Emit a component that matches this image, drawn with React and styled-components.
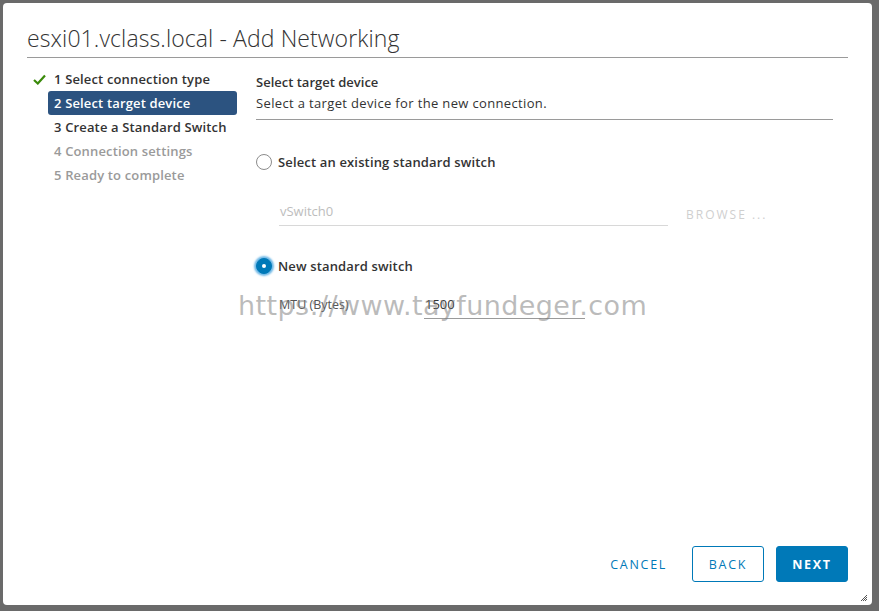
import React from "react";
import styled, { createGlobalStyle } from "styled-components";

const GlobalStyle = createGlobalStyle`
	html, body {
		margin: 0;
		padding: 0;
		background: #6a6a6a;
		font-family: "Open Sans", "Liberation Sans", sans-serif;
	}
	* { box-sizing: border-box; }
`;

const Backdrop = styled.div`
	width: 879px;
	height: 611px;
	padding: 3px 7px 6px 3px;
	background: #6a6a6a;
`;

const Dialog = styled.div`
	position: relative;
	width: 100%;
	height: 100%;
	background: #fff;
	border-radius: 4px;
	display: flex;
	flex-direction: column;
	padding: 0 24px 23px 24px;
`;

const Header = styled.h1`
	margin: 0;
	padding: 20px 0 3px 0;
	border-bottom: 1px solid #9a9a9a;
	font-size: 23px;
	line-height: 31px;
	font-weight: 300;
	color: #333;
	letter-spacing: 0.1px;
`;

const Body = styled.div`
	flex: 1;
	display: grid;
	grid-template-columns: 210px 1fr;
	gap: 19px;
	padding-top: 9px;
`;

const Steps = styled.ul`
	list-style: none;
	margin: 0;
	padding: 0;
	display: flex;
	flex-direction: column;
`;

const Step = styled.li`
	display: flex;
	align-items: center;
	height: 24px;
	font-size: 13px;
	font-weight: 600;
	letter-spacing: 0.15px;
	color: ${(p) => (p.$disabled ? "#9a9a9a" : "#333")};
`;

const Check = styled.span`
	width: 21px;
	display: flex;
	align-items: center;
	padding-left: 6px;
	color: #3a8a0a;
`;

const StepLabel = styled.span`
	flex: 1;
	height: 24px;
	line-height: 24px;
	padding-left: 6px;
	border-radius: 3px;
	background: ${(p) => (p.$active ? "#2c5380" : "transparent")};
	color: ${(p) => (p.$active ? "#fff" : "inherit")};
	white-space: nowrap;
`;

const Content = styled.div`
	padding-top: 5px;
	margin-right: 15px;
	display: flex;
	flex-direction: column;
`;

const SectionHead = styled.div`
	border-bottom: 1px solid #9a9a9a;
	padding-bottom: 5px;
`;

const SectionTitle = styled.div`
	font-size: 13px;
	font-weight: 600;
	color: #333;
	line-height: 20px;
`;

const SectionText = styled.div`
	font-size: 13px;
	letter-spacing: 0.35px;
	color: #333;
	line-height: 22px;
`;

const RadioRow = styled.label`
	display: flex;
	align-items: center;
	gap: 6px;
	height: 20px;
	margin-top: ${(p) => p.$top}px;
	font-size: 13px;
	font-weight: 600;
	letter-spacing: 0.15px;
	color: #333;
`;

const Radio = styled.span`
	width: 16px;
	height: 16px;
	border-radius: 50%;
	display: flex;
	align-items: center;
	justify-content: center;
	border: 1px solid ${(p) => (p.$checked ? "#0079b8" : "#8c8c8c")};
	background: ${(p) => (p.$checked ? "#0079b8" : "#fff")};
	box-shadow: ${(p) => (p.$checked ? "0 0 2px 2px #6fb8e6" : "none")};

	&::after {
		content: "";
		width: 4px;
		height: 4px;
		border-radius: 50%;
		background: ${(p) => (p.$checked ? "#fff" : "transparent")};
	}
`;

const FieldRow = styled.div`
	display: flex;
	align-items: flex-end;
	margin-top: ${(p) => p.$top}px;
	padding-left: 23px;
`;

const FieldLabel = styled.span`
	width: 145px;
	font-size: 12.5px;
	color: #555;
	line-height: 20px;
	padding-bottom: 4px;
`;

const Input = styled.div`
	width: ${(p) => p.$width}px;
	border-bottom: 1px solid ${(p) => (p.$disabled ? "#d8d8d8" : "#9a9a9a")};
	padding: 0 0 4px 1px;
	font-size: 13px;
	line-height: 20px;
	color: ${(p) => (p.$disabled ? "#bdbdbd" : "#333")};
`;

const LinkButton = styled.button`
	border: none;
	background: none;
	padding: 0 0 0 18px;
	margin-bottom: -1px;
	font-family: inherit;
	font-size: 12px;
	letter-spacing: 2px;
	color: ${(p) => (p.$disabled ? "#cfcfcf" : "#0079b8")};
	line-height: 24px;
`;

const Footer = styled.div`
	display: flex;
	justify-content: flex-end;
	align-items: center;
	gap: 12px;
`;

const Button = styled.button`
	height: 36px;
	min-width: 72px;
	padding: 0 12px;
	border-radius: 3px;
	font-family: inherit;
	font-size: 12.5px;
	letter-spacing: 1.7px;
	font-weight: ${(p) => (p.$primary ? 700 : 400)};
	border: 1px solid ${(p) => (p.$flat ? "transparent" : "#0079b8")};
	background: ${(p) => (p.$primary ? "#0079b8" : "#fff")};
	color: ${(p) => (p.$primary ? "#fff" : "#0079b8")};
`;

const Grip = styled.svg`
	position: absolute;
	right: 4px;
	bottom: 3px;
`;

const Watermark = styled.div`
	position: absolute;
	left: 235px;
	top: 287px;
	font-family: "DejaVu Sans", "Liberation Sans", sans-serif;
	font-size: 27px;
	letter-spacing: 0.4px;
	color: rgba(120, 120, 120, 0.5);
	pointer-events: none;
	white-space: nowrap;
`;

const steps = [
	{ n: 1, label: "Select connection type", done: true },
	{ n: 2, label: "Select target device", active: true },
	{ n: 3, label: "Create a Standard Switch" },
	{ n: 4, label: "Connection settings", disabled: true },
	{ n: 5, label: "Ready to complete", disabled: true },
];

const App = () => {
	return (
		<>
			<GlobalStyle />
			<Backdrop>
				<Dialog>
					<Header>esxi01.vclass.local - Add Networking</Header>
					<Body>
						<Steps>
							{steps.map((s) => (
								<Step key={s.n} $disabled={s.disabled}>
									<Check>
										{s.done && (
											<svg width="13" height="11" viewBox="0 0 13 11">
												<path
													d="M1 6 L4.8 9.5 L12 1.5"
													fill="none"
													stroke="#3a8a0a"
													strokeWidth="2.2"
												/>
											</svg>
										)}
									</Check>
									<StepLabel $active={s.active}>
										{s.n} {s.label}
									</StepLabel>
								</Step>
							))}
						</Steps>
						<Content>
							<SectionHead>
								<SectionTitle>Select target device</SectionTitle>
								<SectionText>
									Select a target device for the new connection.
								</SectionText>
							</SectionHead>
							<RadioRow $top={32}>
								<Radio />
								Select an existing standard switch
							</RadioRow>
							<FieldRow $top={29}>
								<Input $width={389} $disabled>
									vSwitch0
								</Input>
								<LinkButton $disabled>BROWSE ...</LinkButton>
							</FieldRow>
							<RadioRow $top={30}>
								<Radio $checked />
								New standard switch
							</RadioRow>
							<FieldRow $top={18}>
								<FieldLabel>MTU (Bytes)</FieldLabel>
								<Input $width={161}>1500</Input>
							</FieldRow>
						</Content>
					</Body>
					<Footer>
						<Button $flat>CANCEL</Button>
						<Button>BACK</Button>
						<Button $primary>NEXT</Button>
					</Footer>
					<Watermark>https://www.tayfundeger.com</Watermark>
					<Grip width="8" height="8" viewBox="0 0 8 8">
						<path d="M7 1 L1 7 M7 3 L3 7 M7 5 L5 7" stroke="#555" strokeWidth="1" />
					</Grip>
				</Dialog>
			</Backdrop>
		</>
	);
};

export default App;
